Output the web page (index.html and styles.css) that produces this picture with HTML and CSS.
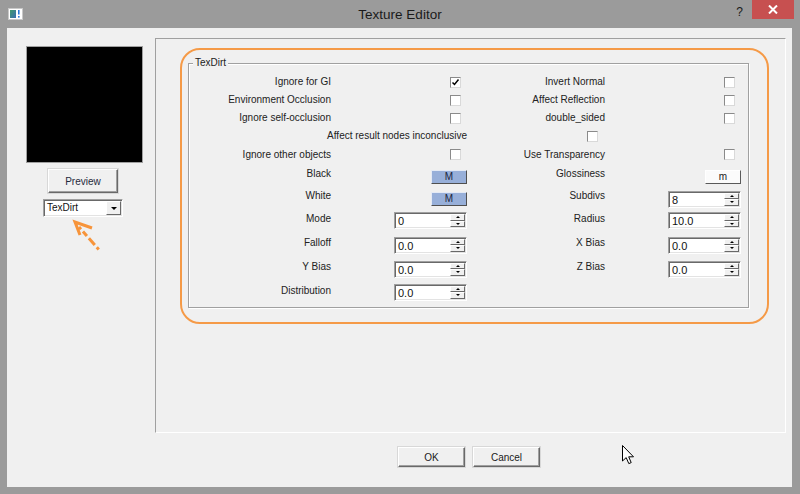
FILE: index.html
```html
<!DOCTYPE html>
<html>
<head>
<meta charset="utf-8">
<title>Texture Editor</title>
<link rel="stylesheet" href="styles.css">
</head>
<body>
<div class="window">
  <div class="titlebar">
    <div class="tb-left">
      <svg class="appicon" width="15" height="12" viewBox="0 0 15 12">
        <defs><linearGradient id="ig" x1="0" y1="0" x2="1" y2="1"><stop offset="0" stop-color="#3f9a6c"/><stop offset="1" stop-color="#3a6db3"/></linearGradient></defs>
        <rect x="0.5" y="0.5" width="14" height="11" fill="#fff" stroke="#c8c8c8"/>
        <rect x="2" y="2" width="6" height="8" fill="url(#ig)"/>
        <rect x="10" y="2" width="1.6" height="4.5" fill="#2a78d8"/>
        <rect x="10" y="8" width="1.6" height="1.6" fill="#2a78d8"/>
      </svg>
    </div>
    <div class="title">Texture Editor</div>
    <div class="tb-right">
      <div class="help">?</div>
      <div class="close">
        <svg width="10" height="9" viewBox="0 0 10 9"><path d="M1 0.5 L9 8.5 M9 0.5 L1 8.5" stroke="#fff" stroke-width="2"/></svg>
      </div>
    </div>
  </div>

  <div class="client">
    <div class="main">
      <div class="leftcol">
        <div class="preview"></div>
        <div class="btn btn-preview">Preview</div>
        <div class="combo">
          <span class="combo-text">TexDirt</span>
          <span class="combo-btn"><span class="tri-down"></span></span>
        </div>
        <svg class="arrow" width="36" height="36" viewBox="0 0 36 36">
          <path d="M22 10 L5 4 L10 17" fill="none" stroke="#f7943a" stroke-width="3" stroke-linejoin="miter"/>
          <path d="M9 9 L30 33" fill="none" stroke="#f7943a" stroke-width="3" stroke-dasharray="3 3 6 3 9"/>
        </svg>
      </div>

      <div class="panel">
        <div class="highlight">
          <div class="group">
            <div class="group-title">TexDirt</div>
            <div class="grid">
              <div class="lbl">Ignore for GI</div>
              <div class="cb checked"><svg width="9" height="9" viewBox="0 0 9 9"><path d="M1.5 4.5 L3.5 6.5 L7.5 1.5" fill="none" stroke="#000" stroke-width="1.5"/></svg></div>
              <div class="lbl">Invert Normal</div>
              <div class="cb"></div>

              <div class="lbl">Environment Occlusion</div>
              <div class="cb"></div>
              <div class="lbl">Affect Reflection</div>
              <div class="cb"></div>

              <div class="lbl">Ignore self-occlusion</div>
              <div class="cb"></div>
              <div class="lbl">double_sided</div>
              <div class="cb"></div>

              <div class="lbl span2">Affect result nodes inconclusive</div>
              <div class="cb mid"></div>
              <div class="empty"></div>

              <div class="lbl">Ignore other objects</div>
              <div class="cb"></div>
              <div class="lbl">Use Transparency</div>
              <div class="cb"></div>

              <div class="lbl up">Black</div>
              <div class="mbtn">M</div>
              <div class="lbl up">Glossiness</div>
              <div class="mbtn light">m</div>

              <div class="lbl up">White</div>
              <div class="mbtn">M</div>
              <div class="lbl up">Subdivs</div>
              <div class="spin low"><span class="spin-val">8</span><span class="spin-btns"><span class="sb"><span class="tri-up"></span></span><span class="sb"><span class="tri-dn"></span></span></span></div>

              <div class="lbl up">Mode</div>
              <div class="spin"><span class="spin-val">0</span><span class="spin-btns"><span class="sb"><span class="tri-up"></span></span><span class="sb"><span class="tri-dn"></span></span></span></div>
              <div class="lbl up">Radius</div>
              <div class="spin"><span class="spin-val">10.0</span><span class="spin-btns"><span class="sb"><span class="tri-up"></span></span><span class="sb"><span class="tri-dn"></span></span></span></div>

              <div class="lbl up2">Falloff</div>
              <div class="spin"><span class="spin-val">0.0</span><span class="spin-btns"><span class="sb"><span class="tri-up"></span></span><span class="sb"><span class="tri-dn"></span></span></span></div>
              <div class="lbl up2">X Bias</div>
              <div class="spin"><span class="spin-val">0.0</span><span class="spin-btns"><span class="sb"><span class="tri-up"></span></span><span class="sb"><span class="tri-dn"></span></span></span></div>

              <div class="lbl up2">Y Bias</div>
              <div class="spin"><span class="spin-val">0.0</span><span class="spin-btns"><span class="sb"><span class="tri-up"></span></span><span class="sb"><span class="tri-dn"></span></span></span></div>
              <div class="lbl up2">Z Bias</div>
              <div class="spin"><span class="spin-val">0.0</span><span class="spin-btns"><span class="sb"><span class="tri-up"></span></span><span class="sb"><span class="tri-dn"></span></span></span></div>

              <div class="lbl up">Distribution</div>
              <div class="spin"><span class="spin-val">0.0</span><span class="spin-btns"><span class="sb"><span class="tri-up"></span></span><span class="sb"><span class="tri-dn"></span></span></span></div>
              <div class="empty"></div>
              <div class="empty"></div>
            </div>
          </div>
        </div>
      </div>
    </div>

    <div class="footer">
      <div class="btn dlg">OK</div>
      <div class="btn dlg">Cancel</div>
    </div>
  </div>

  <svg class="cursor" width="13" height="20" viewBox="0 0 13 20">
    <path d="M0.5 0.5 L0.5 16 L4.2 12.6 L6.8 18.6 L9.2 17.6 L6.7 11.8 L11.5 11.8 Z" fill="#fff" stroke="#000" stroke-width="1" stroke-linejoin="miter"/>
  </svg>
</div>
</body>
</html>
```

FILE: styles.css
```css
* { box-sizing: border-box; }

html, body {
  margin: 0;
  padding: 0;
}

body {
  width: 800px;
  height: 494px;
  overflow: hidden;
  background: #9b9b9b;
  font-family: "Liberation Sans", Arial, sans-serif;
  font-size: 10px;
  color: #222;
}

.window {
  position: relative;
  width: 800px;
  height: 494px;
  display: flex;
  flex-direction: column;
}

/* ---------- title bar ---------- */
.titlebar {
  height: 28px;
  display: grid;
  grid-template-columns: 1fr auto 1fr;
  align-items: start;
}

.tb-left {
  padding: 8px 0 0 8px;
}

.appicon { display: block; }

.title {
  font-size: 13.5px;
  line-height: 16px;
  padding-top: 7px;
  color: #1a1a1a;
}

.tb-right {
  display: flex;
  justify-content: flex-end;
  align-items: flex-start;
  gap: 9px;
  padding-right: 6px;
}

.help {
  font-size: 12px;
  line-height: 12px;
  padding-top: 6px;
  color: #1a1a1a;
}

.close {
  width: 42px;
  height: 19px;
  background: #c75050;
  display: flex;
  align-items: center;
  justify-content: center;
}

.close svg { display: block; }

/* ---------- client ---------- */
.client {
  flex: 1;
  margin: 0 8px 7px 7px;
  background: #f0f0f0;
  display: flex;
  flex-direction: column;
  padding-top: 10px;
}

.main {
  display: flex;
  height: 395px;
}

.leftcol {
  width: 148px;
  display: flex;
  flex-direction: column;
  align-items: flex-start;
}

.preview {
  width: 117px;
  height: 117px;
  margin: 8px 0 0 19px;
  background: #000;
  border: 1px solid #a0a0a0;
}

.btn {
  background: #f0f0f0;
  border: 1px solid;
  border-color: #fff #696969 #696969 #fff;
  box-shadow: inset -1px -1px 0 #a0a0a0, 0 0 0 1px #d8d8d8;
  display: flex;
  align-items: center;
  justify-content: center;
  color: #1f2a3c;
}

.btn-preview {
  width: 70px;
  height: 24px;
  margin: 6px 0 0 41px;
}

.combo {
  width: 80px;
  height: 18px;
  margin: 6px 0 0 36px;
  background: #fff;
  border: 1px solid;
  border-color: #a0a0a0 #fff #fff #a0a0a0;
  box-shadow: inset 1px 1px 0 #696969, inset -1px -1px 0 #e3e3e3;
  display: flex;
  align-items: stretch;
  padding: 1px 1px 1px 1px;
}

.combo-text {
  flex: 1;
  padding-left: 2px;
  line-height: 14px;
  color: #111;
}

.combo-btn {
  width: 15px;
  background: #f0f0f0;
  border: 1px solid;
  border-color: #fff #696969 #696969 #fff;
  display: flex;
  align-items: center;
  justify-content: center;
}

.tri-down {
  width: 0;
  height: 0;
  border-left: 3px solid transparent;
  border-right: 3px solid transparent;
  border-top: 3px solid #000;
}

.arrow {
  display: block;
  margin: 1px 0 0 63px;
}

/* ---------- right panel ---------- */
.panel {
  width: 631px;
  height: 395px;
  border: 1px solid;
  border-color: #a0a0a0 #fff #fff #a0a0a0;
  padding: 9px 0 0 24px;
}

.highlight {
  width: 589px;
  height: 276px;
  border: 2px solid #f59a47;
  border-radius: 20px;
  padding: 13px 0 0 6px;
}

.group {
  position: relative;
  width: 561px;
  height: 245px;
  border: 1px solid #a0a0a0;
  box-shadow: inset 1px 1px 0 #fff, 1px 1px 0 #fff;
  padding-top: 9px;
}

.group-title {
  position: absolute;
  top: -7px;
  left: 4px;
  padding: 0 2px;
  line-height: 12px;
  background: #f0f0f0;
  color: #222;
}

.grid {
  display: grid;
  grid-template-columns: 142px 136px 138px 136px;
  grid-template-rows: 18px 18px 18px 18px 19px 23px 21px 25px 24px 24px 22px;
  align-items: center;
}

.lbl {
  justify-self: end;
  white-space: nowrap;
  line-height: 12px;
  color: #222;
}

.lbl.up { margin-bottom: 3px; }
.lbl.up2 { margin-bottom: 5px; }

.span2 { grid-column: 1 / span 2; }

.cb {
  justify-self: end;
  margin-right: 6px;
  width: 11px;
  height: 11px;
  background: #fff;
  border: 1px solid;
  border-color: #8a8a8a #d9d9d9 #d9d9d9 #8a8a8a;
  display: flex;
  align-items: center;
  justify-content: center;
}

.cb svg { display: block; }
.cb.mid { margin-right: 7px; }

.mbtn {
  justify-self: end;
  width: 36px;
  height: 14px;
  margin-top: 2px;
  background: #97afd9;
  border: 1px solid;
  border-color: #e4eaf5 #4f4f4f #4f4f4f #e4eaf5;
  text-align: center;
  line-height: 12px;
  color: #1b2640;
}

.mbtn.light {
  background: #fbfbfb;
  border-color: #fff #5a5a5a #5a5a5a #fff;
  color: #222;
}

.spin {
  justify-self: end;
  width: 73px;
  height: 17px;
  display: flex;
  background: #fff;
  border: 1px solid;
  border-color: #a0a0a0 #fff #fff #a0a0a0;
  box-shadow: inset 1px 1px 0 #696969, inset -1px -1px 0 #e3e3e3;
  padding: 1px 1px 1px 1px;
}

.spin.low { margin-top: 3px; }

.spin-val {
  flex: 1;
  padding-left: 2px;
  font-size: 11px;
  line-height: 14px;
  color: #111;
}

.spin-btns {
  width: 15px;
  display: flex;
  flex-direction: column;
}

.sb {
  flex: 1;
  background: #f0f0f0;
  border: 1px solid;
  border-color: #fff #696969 #696969 #fff;
  display: flex;
  align-items: center;
  justify-content: center;
}

.tri-up {
  width: 0;
  height: 0;
  border-left: 2px solid transparent;
  border-right: 2px solid transparent;
  border-bottom: 2px solid #000;
}

.tri-dn {
  width: 0;
  height: 0;
  border-left: 2px solid transparent;
  border-right: 2px solid transparent;
  border-top: 2px solid #000;
}

/* ---------- footer ---------- */
.footer {
  display: flex;
  gap: 8px;
  padding: 14px 0 0 391px;
}

.dlg {
  width: 67px;
  height: 20px;
  color: #1a1a1a;
}

/* ---------- mouse cursor ---------- */
.cursor {
  position: absolute;
  left: 622px;
  top: 445px;
}
```
